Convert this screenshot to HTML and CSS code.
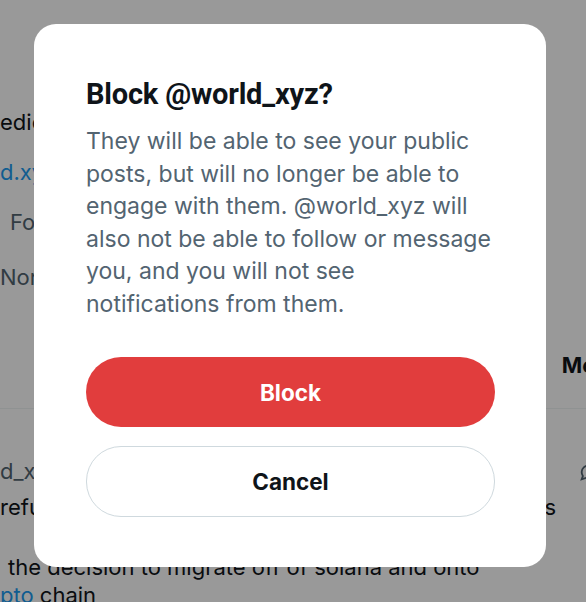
FILE: index.html
```html
<!DOCTYPE html>
<html>
<head>
<meta charset="utf-8">
<link rel="stylesheet" href="styles.css">
</head>
<body>
<div class="page">
  <div class="bg-line l1">edictions are what we do best</div>
  <div class="bg-line l2 blue">d.xyz</div>
  <div class="bg-line l3 gray">Following</div>
  <div class="bg-line l4 gray">Normal account</div>
  <div class="tabs"><span class="tab">Media</span></div>
  <div class="post">
    <div class="post-head"><span class="gray">d_xyz · 2h</span><svg class="reply-icon" viewBox="0 0 24 24" width="22" height="22"><path d="M4 12c0-4 3.5-7 8-7s8 3 8 7-3.5 7-8 7c-1.2 0-2.3-.2-3.3-.6L4 20l1.3-3.6C4.5 15.2 4 13.7 4 12z" fill="none" stroke="#536471" stroke-width="2"/></svg></div>
    <div class="bg-line l5"><span>refused to comment</span><span>say insiders</span></div>
    <div class="bg-line l6">the decision to migrate off of solana and onto</div>
    <div class="bg-line l7"><span class="blue">pto</span> chain</div>
  </div>
</div>
<div class="overlay">
  <div class="modal" role="dialog">
    <h1 class="title">Block @world_xyz?</h1>
    <p class="desc">They will be able to see your public posts, but will no longer be able to engage with them. @world_xyz will also not be able to follow or message you, and you will not see notifications from them.</p>
    <button class="btn btn-block">Block</button>
    <button class="btn btn-cancel">Cancel</button>
  </div>
</div>
</body>
</html>
```
FILE: styles.css
```css
* { box-sizing: border-box; }
html, body { margin: 0; padding: 0; }
body {
  width: 586px;
  height: 602px;
  overflow: hidden;
  background: #ffffff;
  font-family: "Inter", "Roboto", sans-serif;
  color: #0f1419;
}
.page {
  padding-top: 108px;
}
.bg-line {
  font-size: 22px;
  line-height: 28px;
  white-space: nowrap;
}
.blue { color: #1d9bf0; }
.gray { color: #536471; }
.l1 { height: 28px; }
.l2 { margin-top: 22px; }
.l3 { margin-top: 22px; padding-left: 10px; }
.l4 { margin-top: 27px; }
.tabs {
  margin-top: 60px;
  height: 58px;
  border-bottom: 1px solid #eff3f4;
  display: flex;
  justify-content: flex-end;
}
.tab {
  font-weight: 700;
  font-size: 22px;
  line-height: 28px;
  color: #0f1419;
  margin-right: -42px;
}
.post { padding-top: 48px; }
.post-head {
  display: flex;
  justify-content: space-between;
  font-size: 22px;
  line-height: 28px;
  margin-right: -14px;
}
.reply-icon { margin-top: 4px; }
.l5 {
  margin-top: 8px;
  display: flex;
  justify-content: space-between;
  padding-right: 30px;
}
.l6 { margin-top: 32px; padding-left: 8px; }
.l7 { margin-top: 0; }

.overlay {
  position: fixed;
  inset: 0;
  background: rgba(0, 0, 0, 0.4);
  display: flex;
  align-items: flex-start;
  padding-top: 24px;
  padding-left: 34px;
}
.modal {
  width: 512px;
  height: 543px;
  background: #ffffff;
  border-radius: 22px;
  padding: 52px 40px 0 52px;
  display: flex;
  flex-direction: column;
}
.title {
  margin: 0;
  font-family: "Roboto", "Inter", sans-serif;
  font-size: 29px;
  line-height: 36px;
  font-weight: 700;
  color: #0f1419;
  letter-spacing: -0.2px;
}
.desc {
  width: 406px;
  margin: 13px 0 0 0;
  font-size: 23px;
  line-height: 32.5px;
  color: #536471;
  font-weight: 400;
}
.btn {
  width: 409px;
  height: 70px;
  border-radius: 35px;
  font-family: "Inter", "Roboto", sans-serif;
  font-size: 22.5px;
  font-weight: 700;
  cursor: pointer;
}
.btn-block {
  margin-top: 37px;
  background: #e13d3d;
  color: #ffffff;
  border: none;
}
.btn-cancel {
  margin-top: 19px;
  background: #ffffff;
  color: #0f1419;
  border: 1px solid #cfd9de;
  height: 71px;
}
```
